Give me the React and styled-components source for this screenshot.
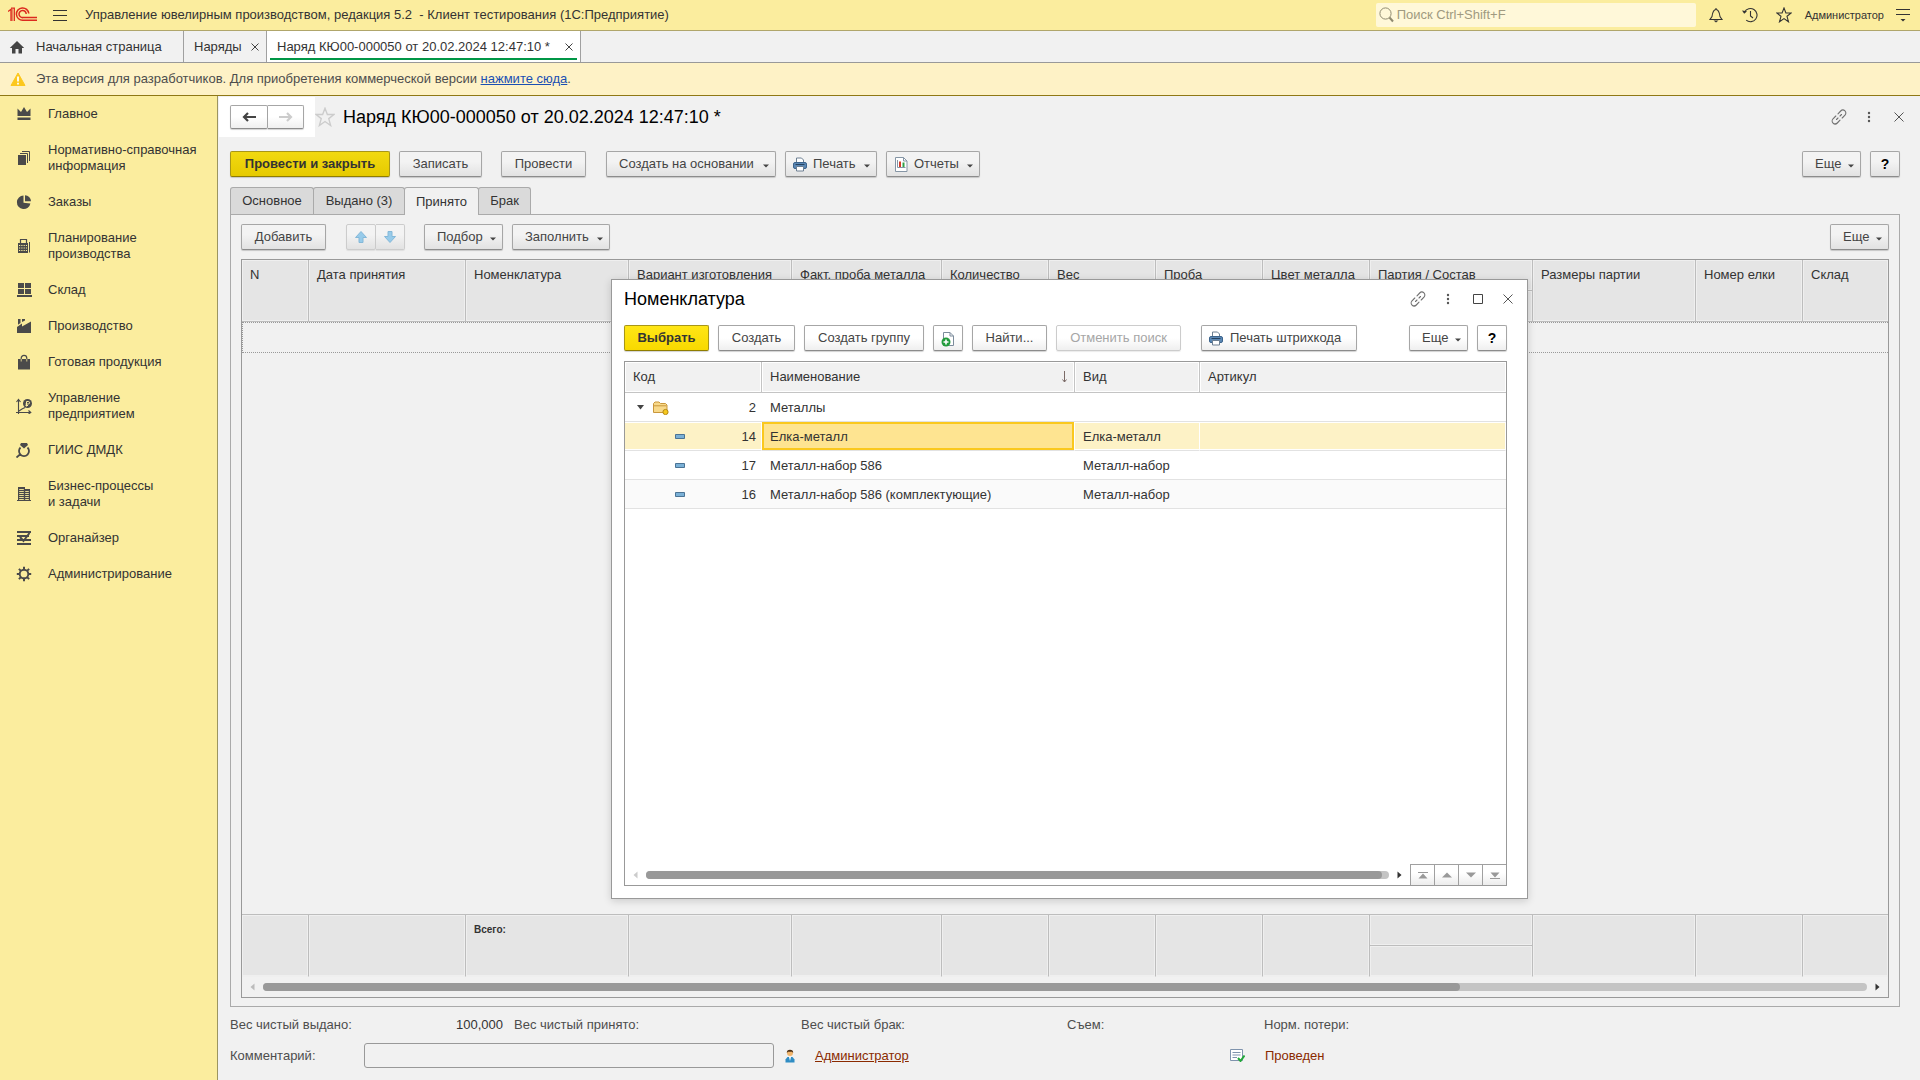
import React from 'react';
import styled, { createGlobalStyle, css } from 'styled-components';

const GlobalStyle = createGlobalStyle`
  * { box-sizing: border-box; }
  html, body, #root { height: 100%; }
  body {
    margin: 0;
    overflow: hidden;
    background: #f1f1f1;
    color: #333;
    font: 13px/16px "Liberation Sans", Arial, sans-serif;
  }
  button, input { font: inherit; color: inherit; }
  h1, h2 { margin: 0; font-weight: 400; font-size: 18px; line-height: 22px; color: #000; }
  svg { display: block; flex: none; }
`;

const Page = styled.div`
  position: relative;
  height: 100vh;
  display: flex;
  flex-direction: column;
`;

/* ---------- top bar ---------- */

const TopBar = styled.header`
  flex: none;
  height: 31px;
  display: flex;
  align-items: center;
  padding: 0 2px 0 8px;
  background: #fbed9e;
  border-bottom: 1px solid #b0a66b;
`;

const AppTitle = styled.div`
  flex: 1;
  margin-left: 3px;
  white-space: pre;
`;

const SearchBox = styled.label`
  width: 320px;
  height: 24px;
  margin-right: 3px;
  display: flex;
  align-items: center;
  gap: 2px;
  padding-left: 3px;
  background: #fff8d9;
  border-radius: 2px;
`;

const SearchInput = styled.input`
  flex: 1;
  border: 0;
  padding: 0;
  outline: 0;
  background: transparent;
  &::placeholder { color: #a09a80; opacity: 1; }
`;

const IconButton = styled.button`
  width: ${(p) => p.$w || 30}px;
  height: 24px;
  padding: 0;
  border: 0;
  display: flex;
  align-items: center;
  justify-content: center;
  background: transparent;
  color: #444;
`;

const UserButton = styled.button`
  padding: 0 4px;
  border: 0;
  background: transparent;
  font-size: 11px;
`;

/* ---------- window tabs ---------- */

const TabStrip = styled.nav`
  flex: none;
  height: 32px;
  display: flex;
  border-bottom: 1px solid #999;
`;

const WindowTab = styled.div`
  position: relative;
  min-width: ${(p) => p.$min}px;
  display: flex;
  align-items: center;
  justify-content: space-between;
  padding: 0 7px 0 ${(p) => (p.$home ? 9 : 10)}px;
  border-right: 1px solid #a0a0a0;
  background: ${(p) => (p.$active ? '#fff' : '#f1f1f1')};
  ${(p) => p.$active && css`
    &::after {
      content: '';
      position: absolute;
      left: 3px;
      right: 3px;
      bottom: 2px;
      height: 2px;
      background: #009646;
    }
  `}
`;

const TabLabel = styled.button`
  padding: 0;
  border: 0;
  background: transparent;
  display: flex;
  align-items: center;
  gap: 11px;
`;

const Notice = styled.div`
  flex: none;
  height: 33px;
  display: flex;
  align-items: center;
  gap: 10px;
  padding-left: 10px;
  background: #fef2c6;
  border-bottom: 1px solid #8f7815;
  color: #4d4d4d;
`;

const NoticeLink = styled.a`
  color: #1a4fb3;
`;

/* ---------- body ---------- */

const Body = styled.div`
  flex: 1;
  min-height: 0;
  display: flex;
`;

const Sidebar = styled.nav`
  flex: none;
  width: 218px;
  background: #fbed9e;
  border-right: 1px solid #9c9560;
`;

const SideItem = styled.a`
  display: flex;
  align-items: center;
  gap: 16px;
  padding: 10px 4px 10px 16px;
  color: #333;
  text-decoration: none;
  white-space: pre-line;
  & > svg { color: #4a4a4a; }
`;

const Main = styled.main`
  flex: 1;
  min-width: 0;
  display: flex;
  flex-direction: column;
  padding: 0 20px 12px 0;
`;

const FormHead = styled.div`
  display: flex;
  align-items: center;
  height: 41px;
  margin-right: -14px;
  padding-left: 1px;
`;

const HistoryBox = styled.div`
  display: flex;
  padding: 8px 11px;
  background: #fff;
`;

const Spacer = styled.div`
  flex: 1;
`;

const FormTitle = styled.h1`
  flex: 1;
`;

const Toolbar = styled.div`
  display: flex;
  align-items: center;
  gap: 9px;
`;

const CommandBar = styled(Toolbar)`
  padding: 14px 0 10px 12px;
`;

const Gap = styled.span`
  width: ${(p) => p.$w}px;
`;

const Btn = styled.button`
  height: 26px;
  min-width: ${(p) => p.$min || 0}px;
  display: flex;
  align-items: center;
  justify-content: ${(p) => (p.$icon || p.$menu ? 'flex-start' : 'center')};
  gap: ${(p) => (p.$menu ? 6 : 7)}px;
  padding: 0 ${(p) => (p.$menu ? 6 : 12)}px 0 ${(p) => (p.$icon ? 7 : 12)}px;
  border: 1px solid #a6a6a6;
  border-bottom-color: #8c8c8c;
  border-radius: 2px;
  background: ${(p) => (p.$light ? 'linear-gradient(#fff 50%, #efefef)' : 'linear-gradient(#f3f3f3 40%, #e2e2e2)')};
  box-shadow: 0 1px 1px rgba(0, 0, 0, 0.18);
  color: #444;
  white-space: nowrap;
  ${(p) => p.$square && css`
    width: 30px;
    padding: 0;
  `}
  ${(p) => p.$help && css`
    color: #000;
    font-size: 14px;
    font-weight: 700;
  `}
  ${(p) => p.$primary && css`
    background: ${p.$light ? 'linear-gradient(#ffe616, #f8d900)' : 'linear-gradient(#f2d911, #e6ca00)'};
    border-color: #a89618;
    border-bottom-color: #8f7d00;
    color: #333;
    font-weight: 700;
  `}
  &:disabled {
    border-color: #ccc;
    color: #a6a6a6;
    box-shadow: 0 1px 1px rgba(0, 0, 0, 0.08);
  }
`;

const CaretMark = styled.svg`
  margin: 3px 0 0 auto;
`;

const Pair = styled.div`
  display: flex;
  & > button + button { border-left: 0; border-radius: 0 2px 2px 0; }
`;

const PairBtn = styled(Btn)`
  width: ${(p) => p.$w}px;
  height: ${(p) => p.$h || 26}px;
  padding: 0;
`;

const FormTabs = styled.div`
  display: flex;
  margin-left: 12px;
  height: 27px;
`;

const FormTab = styled.button`
  position: relative;
  height: ${(p) => (p.$active ? 28 : 27)}px;
  min-width: ${(p) => p.$min}px;
  padding: 0 8px;
  margin-right: -1px;
  border: 1px solid #aaa;
  border-bottom: 0;
  border-radius: 3px 3px 0 0;
  background: ${(p) => (p.$active ? '#f1f1f1' : '#dadada')};
`;

const Panel = styled.section`
  flex: 1;
  min-height: 0;
  margin-left: 12px;
  padding: 9px 10px 8px;
  border: 1px solid #aaa;
  display: flex;
  flex-direction: column;
  gap: 9px;
`;

const TableFrame = styled.div`
  flex: 1;
  min-height: 0;
  display: flex;
  flex-direction: column;
  border: 1px solid #999;
`;

const Grid = styled.table`
  width: 100%;
  table-layout: fixed;
  border-collapse: separate;
  border-spacing: 0;
`;

const cell = css`
  height: 31px;
  padding: 7px 0 0 8px;
  text-align: left;
  vertical-align: top;
  font-weight: 400;
  white-space: nowrap;
  overflow: hidden;
  background: #e5e5e5;
  border-right: 1px solid #bdbdbd;
  border-bottom: 1px solid #bdbdbd;
  box-shadow: inset 0 0 0 1px #efefef;
  &:last-child { border-right: ${(p) => (p.$inner ? '1px solid #bdbdbd' : 0)}; }
`;

const Th = styled.th`${cell}`;

const Sum = styled.td`
  ${cell}
  border-bottom-color: ${(p) => (p.$split ? '#bdbdbd' : '#efefef')};
  font-size: 10px;
  font-weight: 700;
`;

const EmptyRow = styled.td`
  height: 31px;
  padding: 0;
  border: 1px dotted #999;
  border-right: 0;
`;

const Totals = styled(Grid)`
  border-top: 1px solid #bdbdbd;
`;

const ScrollRow = styled.div`
  flex: none;
  height: ${(p) => p.$h}px;
  display: flex;
  align-items: center;
  gap: 8px;
  padding: 0 ${(p) => p.$end || 0}px 0 8px;
`;

const Track = styled.div`
  flex: 1;
  height: 8px;
  border-radius: 4px;
  background: #c4c4c4;
`;

const Thumb = styled.div`
  height: 8px;
  border-radius: 4px;
  background: #999;
`;

/* ---------- form footer ---------- */

const Fields = styled.div`
  display: grid;
  grid-template-columns: 134px 139px 11px 287px 266px 197px 1fr;
  align-items: center;
  height: 36px;
  padding-left: 12px;
  color: #4d4d4d;
`;

const Amount = styled.output`
  text-align: right;
  color: #333;
`;

const CommentRow = styled.div`
  display: flex;
  align-items: center;
  padding-left: 12px;
  color: #4d4d4d;
`;

const CommentLabel = styled.label`
  width: 134px;
`;

const CommentInput = styled.input`
  width: 410px;
  height: 25px;
  padding: 0 6px;
  border: 1px solid #999;
  border-radius: 3px;
  background: transparent;
`;

const IconSlot = styled.span`
  width: ${(p) => p.$w}px;
  padding-right: 10px;
  display: flex;
  justify-content: center;
`;

const Author = styled.a`
  width: 405px;
  color: #8a2a00;
`;

const Status = styled.span`
  color: #8a2a00;
`;

/* ---------- selection dialog ---------- */

const Dialog = styled.section`
  position: absolute;
  left: 611px;
  top: 279px;
  width: 917px;
  height: 620px;
  display: flex;
  flex-direction: column;
  padding: 0 20px 12px 12px;
  background: #fff;
  border: 1px solid #999;
  box-shadow: 0 2px 8px rgba(0, 0, 0, 0.16);
`;

const DialogHead = styled.div`
  flex: none;
  height: 38px;
  margin-right: -16px;
  display: flex;
  align-items: center;
`;

const DialogTitle = styled.h2`
  flex: 1;
`;

const DialogBar = styled(Toolbar)`
  flex: none;
  padding: 7px 0 10px;
`;

const ListTh = styled.th`
  height: 31px;
  padding: 0 7px 0 8px;
  text-align: left;
  font-weight: 400;
  background: #f1f1f1;
  border-right: 1px solid #c4c4c4;
  border-bottom: 1px solid #c4c4c4;
  box-shadow: inset 0 0 0 1px #fff;
  &:last-child { border-right: 0; }
`;

const Row = styled.tr`
  background: ${(p) => (p.$selected ? '#fdf2c6' : p.$alt ? '#fafafa' : '#fff')};
`;

const Td = styled.td`
  height: 29px;
  padding: 1px 7px 0 8px;
  border-bottom: 1px solid #e2e2e2;
  ${(p) => p.$line && css`
    border-right: 1px solid #fff;
    box-shadow: inset 0 1px 0 #fff, inset 0 -1px 0 #fff;
  `}
  ${(p) => p.$current && css`
    background: #fee491;
    box-shadow: inset 0 0 0 2px #fac81e;
  `}
`;

const Between = styled.div`
  display: flex;
  align-items: center;
  justify-content: space-between;
`;

const CodeCell = styled(Between)`
  margin-right: ${(p) => (p.$tight ? -1 : -2)}px;
  padding-left: ${(p) => (p.$leaf ? 42 : 4)}px;
`;

const Marks = styled.span`
  display: flex;
  align-items: center;
  gap: 9px;
`;

const Pager = styled.div`
  align-self: stretch;
  display: flex;
  border-top: 1px solid #a0a0a0;
`;

const PagerBtn = styled.button`
  width: 24px;
  padding: 0;
  display: flex;
  align-items: center;
  justify-content: center;
  border: 0;
  border-left: 1px solid #a0a0a0;
  background: linear-gradient(#fff 40%, #ececec);
  color: #999;
`;

/* ---------- icons ---------- */

const Svg = ({ s = 16, w, h, vb, children, ...rest }) => (
  <svg width={w || s} height={h || s} viewBox={vb || `0 0 ${w || s} ${h || s}`} fill="none" aria-hidden="true" {...rest}>
    {children}
  </svg>
);

const Logo = () => (
  <Svg w={30} h={16}>
    <g stroke="#dc2a1e" strokeWidth="1.5">
      <path d="M0 4.5 3 2.2V14M3 1.2H6.3V14" strokeWidth="1.3" />
      <path d="M20.8 6.5A6.2 6.2 0 1 0 15 13.3H29" />
      <path d="M18.2 7A3.6 3.6 0 1 0 15 10.6H29" />
    </g>
    <path d="M4 2V14" stroke="#dc2a1e" />
  </Svg>
);

const Caret = () => (
  <CaretMark width="6" height="4" viewBox="0 0 6 4" aria-hidden="true">
    <path d="M0 0.5H6L3 3.5Z" fill="#444" />
  </CaretMark>
);
const Cross = ({ s = 8, c = '#444' }) => <Svg s={s}><path d={`M0.5 0.5L${s - 0.5} ${s - 0.5}M${s - 0.5} 0.5L0.5 ${s - 0.5}`} stroke={c} strokeWidth="1" /></Svg>;
const Dots = () => <Svg w={4} h={12}><g fill="#555"><circle cx="2" cy="2" r="1.2" /><circle cx="2" cy="6" r="1.2" /><circle cx="2" cy="10" r="1.2" /></g></Svg>;
const Chain = () => (
  <Svg s={16}>
    <g stroke="#707070" strokeWidth="1.1" strokeLinecap="round">
      <path d="M7 4.8 9.7 2A3 3 0 0 1 14 6.2L11.2 9" />
      <path d="M9 11.2 6.3 14A3 3 0 0 1 2 9.8L4.8 7" />
      <path d="M5.5 10.5 7 9M9 7 10.5 5.5" />
    </g>
  </Svg>
);
const Printer = () => (
  <Svg w={14} h={15}>
    <path d="M3.5 6V1H8.5L10.5 3V6" fill="#fff" stroke="#6c7f92" />
    <rect x="0.5" y="5.5" width="13" height="6" rx="1.5" fill="#5b88b5" stroke="#3d648c" />
    <path d="M2.5 7.5H11.5" stroke="#27425f" />
    <path d="M3.5 9.5H10.5V14H3.5Z" fill="#fff" stroke="#6c7f92" />
  </Svg>
);
const Report = () => (
  <Svg w={14} h={15}>
    <path d="M1.5 0.5H9.5L13 4V14.5H1.5Z" fill="#fff" stroke="#8595a5" />
    <path d="M9.5 0.5V4H13" stroke="#8595a5" />
    <path d="M3.5 3V10.5H11.5" stroke="#8595a5" />
    <path d="M5 4.5H7V10H5Z" fill="#d33a2c" />
    <path d="M8.5 5.5H10.5V10H8.5Z" fill="#32a045" />
  </Svg>
);
const NewDoc = () => (
  <Svg w={14} h={18}>
    <path d="M2.5 10V3.5H9L12.5 7V16.5H8" fill="#fff" stroke="#7c8c9c" />
    <path d="M9 3.5V7H12.5" stroke="#7c8c9c" />
    <circle cx="5" cy="13" r="4.5" fill="#239b3c" />
    <path d="M5 10.5V15.5M2.5 13H7.5" stroke="#fff" strokeWidth="1.6" />
  </Svg>
);
const BlueArrow = ({ down }) => (
  <Svg s={12}>
    <path d={down ? 'M4 0.5H8V5.5H11.5L6 11.5 0.5 5.5H4Z' : 'M4 11.5H8V6.5H11.5L6 0.5 0.5 6.5H4Z'} fill="#97cbea" stroke="#84b8d8" />
  </Svg>
);
const NavArrow = ({ back }) => (
  <Svg w={14} h={12}>
    <path d={back ? 'M14 6H2M6 2 2 6 6 10' : 'M0 6H12M8 2 12 6 8 10'} stroke={back ? '#444' : '#ccc'} strokeWidth="2.2" />
  </Svg>
);
const Star = ({ s = 16, c }) => (
  <Svg s={s} vb="0 0 16 16">
    <path d="M8 1 9.9 6H15.2L11 9.3 12.5 14.8 8 11.6 3.5 14.8 5 9.3 0.8 6H6.1Z" stroke={c} strokeWidth="1.1" />
  </Svg>
);

const sideIcons = {
  crown: <path d="M1.5 2.5 5 6 8 1 11 6 14.5 2.5V10H1.5ZM1.5 11.5H14.5V14H1.5Z" fill="currentColor" />,
  docs: (
    <>
      <path d="M2 5H10V15H2Z" fill="currentColor" />
      <path d="M4 3.5H11.5V13M6 1.5H13.5V11" stroke="currentColor" />
    </>
  ),
  pie: (
    <>
      <path d="M7.5 1.5A6.8 6.8 0 1 0 14.4 9.5L7.5 8.7Z" fill="currentColor" />
      <path d="M9 1.2V7.2H15A6.2 6.2 0 0 0 9 1.2Z" fill="currentColor" />
    </>
  ),
  calc: (
    <>
      <path d="M4.5 5V1.5H10.5V5" stroke="currentColor" strokeWidth="1.2" />
      <path d="M2 5H12V15H2Z" fill="currentColor" />
      <path d="M3 7.5H11M3 10H11M3 12.5H11" stroke="#fbed9e" strokeWidth="1.2" strokeDasharray="1.2 1.1" />
      <path d="M13.5 4V14.5" stroke="currentColor" />
    </>
  ),
  store: <path d="M2 1H8V6H2ZM9 1H15V6H9ZM2 7H8V12H2ZM9 7H15V12H9ZM1 13H16V15H1Z" fill="currentColor" />,
  factory: <path d="M1 15V9L6 5.5V8.5L15 3.5V15ZM2 1H4.5V5L2 6.8ZM6 1H9V2.5L6 4Z" fill="currentColor" />,
  bag: (
    <>
      <path d="M2 5H14V15.5H2Z" fill="currentColor" />
      <path d="M5.2 5V4.2A2.8 2.8 0 0 1 10.8 4.2V5" stroke="currentColor" strokeWidth="1.2" />
      <path d="M5.2 5V7.5M10.8 5V7.5" stroke="#fbed9e" strokeWidth="0.8" />
    </>
  ),
  chart: (
    <>
      <path d="M2.5 16V2M0.5 4 2.5 1.5 4.5 4M0 14.5H14M12.5 12.5 14.8 14.5 12.5 16M3 13 6 11 9 9.5" stroke="currentColor" strokeWidth="1.1" />
      <circle cx="11.5" cy="5.5" r="4.5" fill="currentColor" />
      <path d="M10.5 8.5V3.5H12.3A1.2 1.2 0 0 1 12.3 6H9.5M9.5 7.5H12" stroke="#fbed9e" />
    </>
  ),
  ring: (
    <>
      <path d="M5 1H11L12 3 8 6.5 4 3Z" fill="currentColor" />
      <path d="M4.5 5.5A5 5 0 1 0 11.5 5.5M4.5 12 0.5 15.5" stroke="currentColor" strokeWidth="1.8" />
    </>
  ),
  building: (
    <>
      <path d="M2 1H9V3H14V14H15V15H1V14H2Z" fill="currentColor" />
      <path d="M3.2 3.5H7.8M3.2 5.5H7.8M3.2 7.5H7.8M3.2 9.5H7.8M3.2 11.5H7.8M3.2 13.5H7.8M9.2 5.5H12.8M9.2 7.5H12.8M9.2 9.5H12.8M9.2 11.5H12.8M9.2 13.5H12.8" stroke="#fbed9e" strokeWidth="0.9" />
    </>
  ),
  organizer: (
    <>
      <path d="M1 2H15M1 6H13M1 10H15M1 14H15" stroke="currentColor" strokeWidth="1.8" />
      <path d="M4 7 7.5 11 13.5 3" stroke="currentColor" strokeWidth="2" />
    </>
  ),
  gear: (
    <>
      <circle cx="8" cy="8" r="4.3" stroke="currentColor" strokeWidth="1.9" />
      <path d="M8 0.8V3.5M8 12.5V15.2M0.8 8H3.5M12.5 8H15.2M2.9 2.9 4.9 4.9M11.1 11.1 13.1 13.1M2.9 13.1 4.9 11.1M11.1 4.9 13.1 2.9" stroke="currentColor" strokeWidth="2" />
    </>
  ),
};

/* ---------- data ---------- */

const sections = [
  ['crown', 'Главное'],
  ['docs', 'Нормативно-справочная\nинформация'],
  ['pie', 'Заказы'],
  ['calc', 'Планирование\nпроизводства'],
  ['store', 'Склад'],
  ['factory', 'Производство'],
  ['bag', 'Готовая продукция'],
  ['chart', 'Управление\nпредприятием'],
  ['ring', 'ГИИС ДМДК'],
  ['building', 'Бизнес-процессы\nи задачи'],
  ['organizer', 'Органайзер'],
  ['gear', 'Администрирование'],
];

const columns = [
  ['N', 67],
  ['Дата принятия', 157],
  ['Номенклатура', 163],
  ['Вариант изготовления', 163],
  ['Факт. проба металла', 150],
  ['Количество', 107],
  ['Вес', 107],
  ['Проба', 107],
  ['Цвет металла', 107],
  ['Партия / Состав', 163, true],
  ['Размеры партии', 163],
  ['Номер елки', 107],
  ['Склад', 0],
];

const items = [
  { code: '14', name: 'Елка-металл', kind: 'Елка-металл', selected: true },
  { code: '17', name: 'Металл-набор 586', kind: 'Металл-набор' },
  { code: '16', name: 'Металл-набор 586 (комплектующие)', kind: 'Металл-набор', alt: true },
];

const Cols = () => (
  <colgroup>
    {columns.map(([name, width]) => <col key={name} style={width ? { width } : undefined} />)}
  </colgroup>
);

const MenuBtn = ({ icon, children, ...rest }) => (
  <Btn type="button" $menu $icon={!!icon} {...rest}>
    {icon}
    {children}
    <Caret />
  </Btn>
);

const ScrollArrow = ({ right, c }) => (
  <Svg w={5} h={8}><path d={right ? 'M0.5 0.5V7.5L4.5 4Z' : 'M4.5 0.5V7.5L0.5 4Z'} fill={c} /></Svg>
);

const SelectionDialog = () => (
  <Dialog role="dialog" aria-label="Номенклатура">
    <DialogHead>
      <DialogTitle>Номенклатура</DialogTitle>
      <IconButton aria-label="Ссылка"><Chain /></IconButton>
      <IconButton aria-label="Меню"><Dots /></IconButton>
      <IconButton aria-label="Развернуть"><Svg s={10}><path d="M0.5 0.5H9.5V9.5H0.5Z" stroke="#444" /></Svg></IconButton>
      <IconButton aria-label="Закрыть"><Cross s={10} c="#555" /></IconButton>
    </DialogHead>
    <DialogBar>
      <Btn $light $primary $min={85}>Выбрать</Btn>
      <Btn $light $min={77}>Создать</Btn>
      <Btn $light $min={120}>Создать группу</Btn>
      <Btn $light $square aria-label="Скопировать"><NewDoc /></Btn>
      <Btn $light $min={75}>Найти...</Btn>
      <Btn $light $min={125} disabled>Отменить поиск</Btn>
      <Gap $w={2} />
      <Btn $light $icon $min={156}><Printer />Печать штрихкода</Btn>
      <Spacer />
      <MenuBtn $light $min={59}>Еще</MenuBtn>
      <Btn $light $square $help>?</Btn>
    </DialogBar>
    <TableFrame>
      <Grid>
        <colgroup>
          <col style={{ width: 137 }} />
          <col style={{ width: 313 }} />
          <col style={{ width: 125 }} />
          <col />
        </colgroup>
        <thead>
          <tr>
            <ListTh>Код</ListTh>
            <ListTh>
              <Between>
                Наименование
                <Svg w={5} h={12}><path d="M2.5 0V11M0.5 8.5 2.5 11 4.5 8.5" stroke="#7a6a66" /></Svg>
              </Between>
            </ListTh>
            <ListTh>Вид</ListTh>
            <ListTh>Артикул</ListTh>
          </tr>
        </thead>
        <tbody>
          <Row>
            <Td>
              <CodeCell $tight>
                <Marks>
                  <Svg w={7} h={5}><path d="M0 0H7L3.5 4.5Z" fill="#444" /></Svg>
                  <Svg w={16} h={14}>
                    <path d="M0.5 11.5V2.5L2 1H6L7.5 2.5H12.5L14 4V11.5Z" fill="#f8d98a" stroke="#c9973c" />
                    <path d="M1 4.8H13.5" stroke="#c9973c" />
                    <circle cx="12.5" cy="11" r="2.6" fill="#f6c81d" stroke="#b58a14" />
                  </Svg>
                </Marks>
                2
              </CodeCell>
            </Td>
            <Td>Металлы</Td>
            <Td />
            <Td />
          </Row>
          {items.map((it) => (
            <Row key={it.code} $selected={it.selected} $alt={it.alt}>
              <Td $line={it.selected}>
                <CodeCell $leaf $tight={!it.selected}>
                  <Svg w={10} h={5}><path d="M0.5 0.5H9.5V4.5H0.5Z" fill="#7ab0d6" stroke="#4b7394" /></Svg>
                  {it.code}
                </CodeCell>
              </Td>
              <Td $line={it.selected} $current={it.selected}>{it.name}</Td>
              <Td $line={it.selected}>{it.kind}</Td>
              <Td $line={it.selected} />
            </Row>
          ))}
        </tbody>
      </Grid>
      <Spacer />
      <ScrollRow $h={21}>
        <ScrollArrow c="#ccc" />
        <Track><Thumb style={{ width: '99%' }} /></Track>
        <ScrollArrow right c="#333" />
        <Pager>
          <PagerBtn aria-label="В начало"><Svg w={10} h={7}><path d="M0 0H10V1H0ZM5 1.5 9.5 6.5H0.5Z" fill="currentColor" /></Svg></PagerBtn>
          <PagerBtn aria-label="Вверх"><Svg w={10} h={6}><path d="M5 0.5 10 5.5H0Z" fill="currentColor" /></Svg></PagerBtn>
          <PagerBtn aria-label="Вниз"><Svg w={10} h={6}><path d="M5 5.5 10 0.5H0Z" fill="currentColor" /></Svg></PagerBtn>
          <PagerBtn aria-label="В конец"><Svg w={10} h={7}><path d="M0 6H10V7H0ZM5 5.5 9.5 0.5H0.5Z" fill="currentColor" /></Svg></PagerBtn>
        </Pager>
      </ScrollRow>
    </TableFrame>
  </Dialog>
);

export default function App() {
  return (
    <Page>
      <GlobalStyle />
      <TopBar>
        <Logo />
        <IconButton $w={44} aria-label="Главное меню">
          <Svg w={14} h={12}><path d="M0 1.5H14M0 6.5H14M0 11.5H14" stroke="#333" /></Svg>
        </IconButton>
        <AppTitle>{'Управление ювелирным производством, редакция 5.2  - Клиент тестирования (1С:Предприятие)'}</AppTitle>
        <SearchBox>
          <Svg s={16}>
            <circle cx="6.5" cy="6.5" r="5.6" stroke="#8f8a70" />
            <path d="M10.5 10.5 14 14.5" stroke="#8f8a70" strokeWidth="2" />
          </Svg>
          <SearchInput aria-label="Поиск" placeholder="Поиск Ctrl+Shift+F" />
        </SearchBox>
        <IconButton $w={34} aria-label="Уведомления">
          <Svg s={16}>
            <path d="M2 12.5H14L12 9.5C11.5 6 11 2.5 8 2.5S4.5 6 4 9.5ZM8 2.5V1" stroke="#333" strokeWidth="1.1" />
            <path d="M5.5 13.5H10.5L8 15.5Z" fill="#333" />
          </Svg>
        </IconButton>
        <IconButton $w={34} aria-label="История">
          <Svg s={16}>
            <path d="M2.6 5A6.6 6.6 0 1 1 4.2 13.2" stroke="#333" strokeWidth="1.1" />
            <path d="M0 3.5 2.2 6.8 5 4.2Z" fill="#333" />
            <path d="M8.5 4V9L11 11" stroke="#333" strokeWidth="1.1" />
          </Svg>
        </IconButton>
        <IconButton $w={34} aria-label="Избранное"><Star c="#333" /></IconButton>
        <UserButton>Администратор</UserButton>
        <IconButton aria-label="Настройки">
          <Svg w={14} h={14}><path d="M0 1.5H14M0 6.5H14" stroke="#333" /><path d="M4.5 11H9.5L7 13.5Z" fill="#333" /></Svg>
        </IconButton>
      </TopBar>

      <TabStrip>
        <WindowTab $home $min={184}>
          <TabLabel>
            <Svg s={16}><path d="M8 2 0.8 9H3V14.5H6.5V10H9.5V14.5H13V9H15.2Z" fill="#444" /></Svg>
            Начальная страница
          </TabLabel>
        </WindowTab>
        <WindowTab $min={83}>
          <TabLabel>Наряды</TabLabel>
          <IconButton $w={8} aria-label="Закрыть"><Cross /></IconButton>
        </WindowTab>
        <WindowTab $active $min={314}>
          <TabLabel>Наряд КЮ00-000050 от 20.02.2024 12:47:10 *</TabLabel>
          <IconButton $w={8} aria-label="Закрыть"><Cross /></IconButton>
        </WindowTab>
      </TabStrip>

      <Notice>
        <Svg s={16}>
          <path d="M8 2 15 14.5H1Z" fill="#fcc81e" stroke="#fcc81e" strokeLinejoin="round" />
          <path d="M8 5.5V10.5M8 11.8V13.5" stroke="#fff" strokeWidth="1.8" />
        </Svg>
        <span>Эта версия для разработчиков. Для приобретения коммерческой версии <NoticeLink href="#buy">нажмите сюда</NoticeLink>.</span>
      </Notice>

      <Body>
        <Sidebar>
          {sections.map(([icon, name]) => (
            <SideItem key={icon} href={`#${icon}`}>
              <Svg>{sideIcons[icon]}</Svg>
              <span>{name}</span>
            </SideItem>
          ))}
        </Sidebar>

        <Main>
          <FormHead>
            <HistoryBox>
              <Pair>
                <PairBtn $light $w={38} $h={24} aria-label="Назад"><NavArrow back /></PairBtn>
                <PairBtn $light $w={36} $h={24} aria-label="Вперед"><NavArrow /></PairBtn>
              </Pair>
            </HistoryBox>
            <IconButton $w={20} aria-label="В избранное"><Star s={20} c="#ccc" /></IconButton>
            <Gap $w={8} />
            <FormTitle>Наряд КЮ00-000050 от 20.02.2024 12:47:10 *</FormTitle>
            <IconButton aria-label="Ссылка"><Chain /></IconButton>
            <IconButton aria-label="Меню"><Dots /></IconButton>
            <IconButton aria-label="Закрыть"><Cross s={10} c="#555" /></IconButton>
          </FormHead>

          <CommandBar>
            <Btn $primary $min={160}>Провести и закрыть</Btn>
            <Btn $min={83}>Записать</Btn>
            <Gap $w={1} />
            <Btn $min={85}>Провести</Btn>
            <Gap $w={2} />
            <MenuBtn $min={170}>Создать на основании</MenuBtn>
            <MenuBtn $min={92} icon={<Printer />}>Печать</MenuBtn>
            <MenuBtn $min={94} icon={<Report />}>Отчеты</MenuBtn>
            <Spacer />
            <MenuBtn $min={59}>Еще</MenuBtn>
            <Btn $square $help>?</Btn>
          </CommandBar>

          <FormTabs role="tablist">
            <FormTab role="tab" $min={84}>Основное</FormTab>
            <FormTab role="tab" $min={92}>Выдано (3)</FormTab>
            <FormTab role="tab" $min={75} $active>Принято</FormTab>
            <FormTab role="tab" $min={53}>Брак</FormTab>
          </FormTabs>

          <Panel>
            <Toolbar>
              <Btn $min={85}>Добавить</Btn>
              <Gap $w={2} />
              <Pair>
                <PairBtn $w={30} disabled aria-label="Выше"><BlueArrow /></PairBtn>
                <PairBtn $w={29} disabled aria-label="Ниже"><BlueArrow down /></PairBtn>
              </Pair>
              <Gap $w={1} />
              <MenuBtn $min={79}>Подбор</MenuBtn>
              <MenuBtn $min={98}>Заполнить</MenuBtn>
              <Spacer />
              <MenuBtn $min={59}>Еще</MenuBtn>
            </Toolbar>
            <TableFrame>
              <Grid>
                <Cols />
                <thead>
                  <tr>
                    {columns.map(([name, , split]) => <Th key={name} rowSpan={split ? 1 : 2}>{name}</Th>)}
                  </tr>
                  <tr><Th $inner /></tr>
                </thead>
                <tbody>
                  <tr><EmptyRow colSpan={columns.length} /></tr>
                </tbody>
              </Grid>
              <Spacer />
              <Totals>
                <Cols />
                <tbody>
                  <tr>
                    {columns.map(([name, , split]) => (
                      <Sum key={name} rowSpan={split ? 1 : 2} $split={split}>{name === 'Номенклатура' ? 'Всего:' : null}</Sum>
                    ))}
                  </tr>
                  <tr><Sum $inner /></tr>
                </tbody>
              </Totals>
              <ScrollRow $h={20} $end={8}>
                <ScrollArrow c="#bbb" />
                <Track><Thumb style={{ width: '74.6%' }} /></Track>
                <ScrollArrow right c="#333" />
              </ScrollRow>
            </TableFrame>
          </Panel>

          <Fields>
            <span>Вес чистый выдано:</span>
            <Amount>100,000</Amount>
            <span />
            <span>Вес чистый принято:</span>
            <span>Вес чистый брак:</span>
            <span>Съем:</span>
            <span>Норм. потери:</span>
          </Fields>
          <CommentRow>
            <CommentLabel htmlFor="comment">Комментарий:</CommentLabel>
            <CommentInput id="comment" />
            <IconSlot $w={41}>
              <Svg w={10} h={14}>
                <path d="M0.5 13.5V10.5L2.5 8H7.5L9.5 10.5V13.5Z" fill="#2f8dc4" />
                <path d="M4 8 5 12 6 8Z" fill="#fff" />
                <circle cx="5" cy="4" r="3" fill="#f1b56c" />
                <path d="M1.8 4A3.2 3.2 0 0 1 8.2 4L7 2.8H3Z" fill="#4a2e14" />
              </Svg>
            </IconSlot>
            <Author href="#author">Администратор</Author>
            <IconSlot $w={45}>
              <Svg w={15} h={13}>
                <path d="M0.5 0.5H12.5V11.5H0.5Z" fill="#fff" stroke="#7f93ad" />
                <path d="M2.5 3.5H10.5M2.5 6H10.5M2.5 8.5H7" stroke="#7f93ad" />
                <path d="M8 9 10.5 12 14.5 6.5" stroke="#22a83a" strokeWidth="2" />
              </Svg>
            </IconSlot>
            <Status>Проведен</Status>
          </CommentRow>
        </Main>
      </Body>

      <SelectionDialog />
    </Page>
  );
}
